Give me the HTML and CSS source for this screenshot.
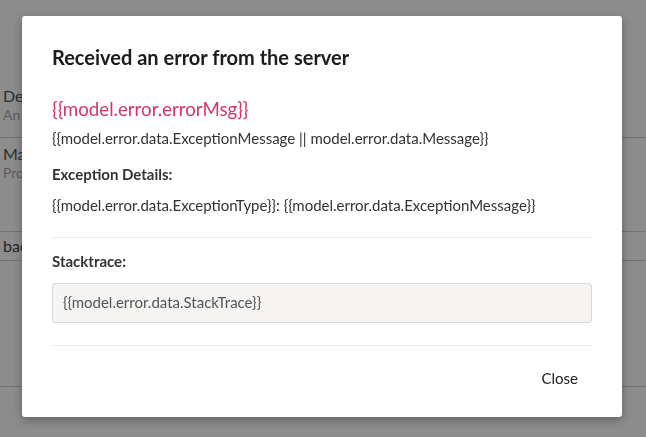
FILE: index.html
```html
<!DOCTYPE html>
<html>
<head>
<meta charset="utf-8">
<link rel="stylesheet" href="styles.css">
</head>
<body>
<div class="page">
  <div class="row row-first">
    <div class="item"><div class="item-title">Details</div><div class="item-sub">An overview</div></div>
  </div>
  <div class="row row-second">
    <div class="item"><div class="item-title">Manage</div><div class="item-sub">Properties</div></div>
  </div>
  <div class="row row-back">
    <div class="item"><div class="item-back">back</div></div>
  </div>
  <div class="row row-last"></div>
</div>
<div class="backdrop"></div>
<div class="modal">
  <div class="modal-header">
    <h3 class="modal-title">Received an error from the server</h3>
  </div>
  <div class="modal-body">
    <div class="error-msg">{{model.error.errorMsg}}</div>
    <p class="text text-first">{{model.error.data.ExceptionMessage || model.error.data.Message}}</p>
    <p class="label label-details">Exception Details:</p>
    <p class="text text-type">{{model.error.data.ExceptionType}}: {{model.error.data.ExceptionMessage}}</p>
    <hr class="sep">
    <p class="label label-stack">Stacktrace:</p>
    <div class="stack">{{model.error.data.StackTrace}}</div>
    <hr class="sep sep-bottom">
  </div>
  <div class="modal-footer">
    <button class="btn-close">Close</button>
  </div>
</div>
</body>
</html>
```

FILE: styles.css
```css
html, body {
  margin: 0;
  padding: 0;
  height: 100%;
  background: #ffffff;
  font-family: Lato, "Open Sans", "Liberation Sans", sans-serif;
  overflow: hidden;
}
.page {
  display: flex;
  flex-direction: column;
  padding-top: 86px;
}
.row {
  border-bottom: 1px solid #d0d0d0;
  margin-left: -60px;
}
.item {
  margin-left: 63px;
  width: 19px;
  overflow: hidden;
  white-space: nowrap;
}
.row-first { height: 51px; }
.row-second { height: 93px; }
.row-back { height: 28px; }
.row-last { height: 125px; }
.item-title {
  font-size: 16px;
  color: #555;
  line-height: 20px;
}
.item-sub {
  font-size: 14px;
  color: #aaa;
  line-height: 18px;
}
.row-second .item { padding-top: 6px; }
.item-back {
  font-size: 16px;
  color: #444;
  line-height: 28px;
}
.backdrop {
  position: fixed;
  inset: 0;
  background: rgba(0, 0, 0, 0.45);
}
.modal {
  position: absolute;
  left: 22px;
  top: 16px;
  width: 600px;
  height: 401px;
  background: #fff;
  border-radius: 3px;
  box-shadow: 0 3px 9px rgba(0, 0, 0, 0.3);
  display: flex;
  flex-direction: column;
}
.modal-header {
  padding: 29px 30px 0;
}
.modal-title {
  margin: 0;
  font-size: 20px;
  font-weight: 700;
  line-height: 24px;
  color: #1c1c1c;
}
.modal-body {
  padding: 0 30px;
}
.error-msg {
  margin-top: 29px;
  font-size: 18.7px;
  line-height: 22px;
  color: #d6336c;
}
.text {
  margin: 0;
  font-size: 15px;
  line-height: 20px;
  color: #333;
}
.text-first { margin-top: 8px; }
.text-type { margin-top: 11px; }
.label {
  margin: 0;
  font-size: 15px;
  font-weight: 700;
  line-height: 20px;
  color: #333;
}
.label-details { margin-top: 16px; }
.sep {
  margin: 22px 0 0;
  border: 0;
  border-top: 1px solid #eeeeee;
}
.label-stack {
  margin-top: 13px;
}
.stack {
  margin-top: 12px;
  height: 40px;
  box-sizing: border-box;
  border: 1px solid #d9d9d9;
  border-radius: 3px;
  background: #f5f4f2;
  padding: 0 10px;
  font-size: 15px;
  line-height: 37px;
  color: #555;
}
.sep-bottom {
  margin-top: 22px;
}
.modal-footer {
  display: flex;
  justify-content: flex-end;
  padding: 22px 30px 0;
}
.btn-close {
  border: 0;
  background: transparent;
  font-family: inherit;
  font-size: 15px;
  color: #222;
  padding: 0 14px;
  line-height: 20px;
  cursor: pointer;
}
```
